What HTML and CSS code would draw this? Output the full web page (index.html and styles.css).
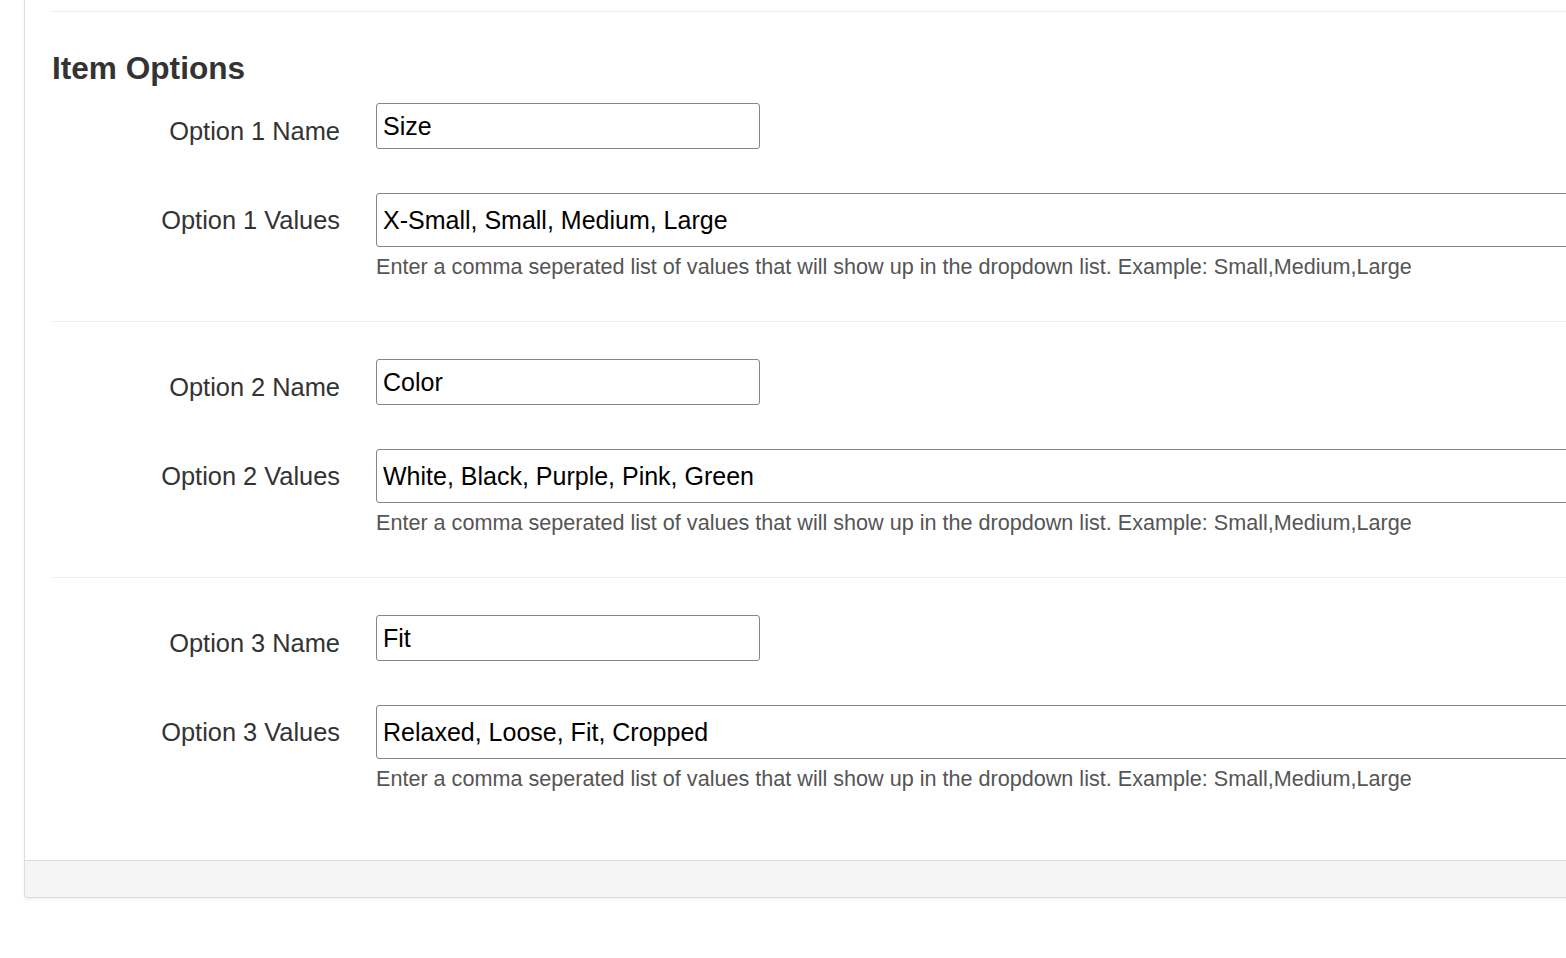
FILE: index.html
```html
<!DOCTYPE html>
<html lang="en">
<head>
<meta charset="utf-8">
<title>Item Options</title>
<link rel="stylesheet" href="styles.css">
</head>
<body>
<div class="panel">
  <div class="panel-body">
    <div class="section first">
      <h3 class="section-title">Item Options</h3>
      <div class="form-group">
        <label class="control-label">Option 1 Name</label>
        <div class="controls"><input class="input-name" type="text" value="Size"></div>
      </div>
      <div class="form-group values">
        <label class="control-label">Option 1 Values</label>
        <div class="controls">
          <input class="input-values" type="text" value="X-Small, Small, Medium, Large">
          <p class="help-block">Enter a comma seperated list of values that will show up in the dropdown list. Example: Small,Medium,Large</p>
        </div>
      </div>
    </div>
    <div class="section">
      <div class="form-group">
        <label class="control-label">Option 2 Name</label>
        <div class="controls"><input class="input-name" type="text" value="Color"></div>
      </div>
      <div class="form-group values">
        <label class="control-label">Option 2 Values</label>
        <div class="controls">
          <input class="input-values" type="text" value="White, Black, Purple, Pink, Green">
          <p class="help-block">Enter a comma seperated list of values that will show up in the dropdown list. Example: Small,Medium,Large</p>
        </div>
      </div>
    </div>
    <div class="section last">
      <div class="form-group">
        <label class="control-label">Option 3 Name</label>
        <div class="controls"><input class="input-name" type="text" value="Fit"></div>
      </div>
      <div class="form-group values">
        <label class="control-label">Option 3 Values</label>
        <div class="controls">
          <input class="input-values" type="text" value="Relaxed, Loose, Fit, Cropped">
          <p class="help-block">Enter a comma seperated list of values that will show up in the dropdown list. Example: Small,Medium,Large</p>
        </div>
      </div>
    </div>
  </div>
  <div class="panel-footer"></div>
</div>
</body>
</html>
```
FILE: styles.css
```css
html, body {
  margin: 0;
  padding: 0;
  background: #ffffff;
  overflow: hidden;
}
body {
  font-family: "Liberation Sans", Arial, Helvetica, sans-serif;
  color: #333333;
  width: 1566px;
  height: 958px;
}
.panel {
  margin-left: 24px;
  width: 1700px;
  border-left: 1px solid #dddddd;
  border-bottom: 1px solid #dddddd;
  border-bottom-left-radius: 4px;
  box-shadow: 0 2px 3px rgba(0, 0, 0, 0.06);
  background: #ffffff;
}
.panel-body {
  padding: 11px 0 0 27px;
}
.section {
  border-top: 1px solid #eeeeee;
  padding-top: 37px;
  padding-bottom: 42px;
}
.section.first {
  padding-top: 38px;
}
.section.last {
  padding-bottom: 69px;
}
.section-title {
  margin: 0 0 17px 0;
  font-size: 31.6px;
  line-height: 36px;
  font-weight: bold;
  color: #333333;
}
.form-group {
  display: flex;
  align-items: flex-start;
}
.form-group.values {
  margin-top: 44px;
}
.control-label {
  flex: 0 0 324px;
  box-sizing: border-box;
  padding-right: 36px;
  text-align: right;
  font-size: 25.4px;
  line-height: 30px;
  color: #333333;
  padding-top: 13px;
}
.form-group.values .control-label {
  padding-top: 12px;
}
.controls {
  display: flex;
  flex-direction: column;
}
input {
  font-family: "Liberation Sans", Arial, Helvetica, sans-serif;
  color: #000000;
  border: 1px solid #858585;
  border-radius: 3px;
  box-sizing: border-box;
  padding: 0 6px;
  margin: 0;
  background: #ffffff;
  outline: none;
}
.input-name {
  width: 384px;
  height: 46px;
  font-size: 25px;
  padding-bottom: 0;
}
.input-values {
  width: 1300px;
  height: 54px;
  font-size: 25px;
}
.help-block {
  margin: 8px 0 0 0;
  font-size: 21.6px;
  line-height: 24px;
  color: #555555;
}
.panel-footer {
  height: 36px;
  background: #f5f5f5;
  border-top: 1px solid #dddddd;
  border-bottom-left-radius: 4px;
}
```
